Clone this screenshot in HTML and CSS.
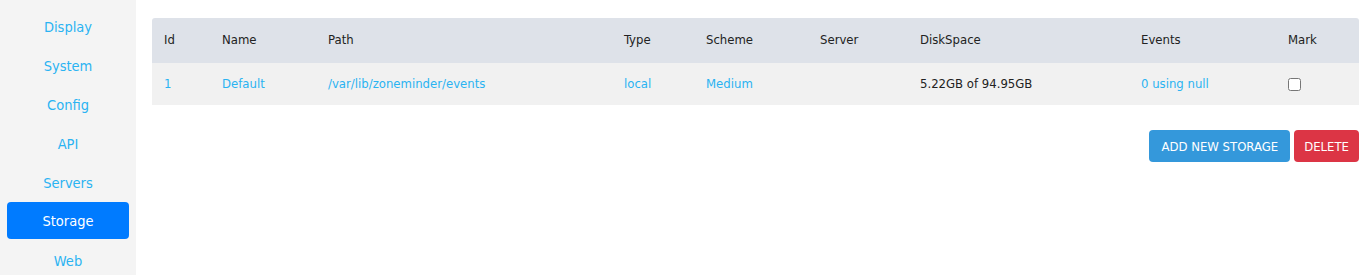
FILE: index.html
```html
<!DOCTYPE html>
<html lang="en">
<head>
    <meta charset="UTF-8">
    <title>Options - Storage</title>
    <link rel="stylesheet" href="styles.css">
</head>
<body>
    <div class="page">
        <nav class="sidebar">
            <a class="nav-item" href="#">Display</a>
            <a class="nav-item" href="#">System</a>
            <a class="nav-item" href="#">Config</a>
            <a class="nav-item" href="#">API</a>
            <a class="nav-item" href="#">Servers</a>
            <a class="nav-item active" href="#">Storage</a>
            <a class="nav-item" href="#">Web</a>
        </nav>
        <main class="content">
            <table class="storage-table">
                <thead>
                    <tr>
                        <th class="col-id">Id</th>
                        <th class="col-name">Name</th>
                        <th class="col-path">Path</th>
                        <th class="col-type">Type</th>
                        <th class="col-scheme">Scheme</th>
                        <th class="col-server">Server</th>
                        <th class="col-disk">DiskSpace</th>
                        <th class="col-events">Events</th>
                        <th class="col-mark">Mark</th>
                    </tr>
                </thead>
                <tbody>
                    <tr>
                        <td><a href="#">1</a></td>
                        <td><a href="#">Default</a></td>
                        <td><a href="#">/var/lib/zoneminder/events</a></td>
                        <td><a href="#">local</a></td>
                        <td><a href="#">Medium</a></td>
                        <td></td>
                        <td>5.22GB of 94.95GB</td>
                        <td><a href="#">0 using null</a></td>
                        <td><input type="checkbox" class="mark"></td>
                    </tr>
                </tbody>
            </table>
            <div class="actions">
                <button class="btn btn-add">ADD NEW STORAGE</button>
                <button class="btn btn-delete">DELETE</button>
            </div>
        </main>
    </div>
</body>
</html>
```

FILE: styles.css
```css
body {
    margin: 0;
    font-family: "DejaVu Sans Condensed", "DejaVu Sans", sans-serif;
    background-color: #fff;
    color: #222;
}
a {
    color: #2ab3f2;
    text-decoration: none;
}
.page {
    display: flex;
    height: 275px;
    overflow: hidden;
}
.sidebar {
    width: 136px;
    flex-shrink: 0;
    background-color: #f4f4f4;
    display: flex;
    flex-direction: column;
    gap: 2px;
    padding: 7px 7px 0;
    box-sizing: border-box;
}
.nav-item {
    display: block;
    height: 37px;
    line-height: 40px;
    text-align: center;
    font-size: 14.5px;
    border-radius: 4px;
}
.nav-item.active {
    background-color: #007bff;
    color: #fff;
    line-height: 38px;
}
.content {
    flex: 1;
    padding: 18px 0 0 16px;
}
.storage-table {
    width: 100%;
    border-collapse: collapse;
    font-size: 13px;
    text-align: left;
}
.storage-table th {
    background-color: #dee2e9;
    font-weight: normal;
    height: 43px;
    padding: 0 0 2px 12px;
}
.storage-table th:first-child {
    border-top-left-radius: 3px;
}
.storage-table th:last-child {
    border-top-right-radius: 3px;
}
.storage-table td {
    background-color: #f1f1f1;
    height: 40px;
    padding: 0 0 2px 12px;
}
.col-id { width: 46px; }
.col-name { width: 94px; }
.col-path { width: 284px; }
.col-type { width: 70px; }
.col-scheme { width: 102px; }
.col-server { width: 88px; }
.col-disk { width: 209px; }
.col-events { width: 135px; }
.mark {
    margin: 0;
    width: 13px;
    height: 13px;
    vertical-align: middle;
}
.actions {
    display: flex;
    justify-content: flex-end;
    gap: 4px;
    margin-top: 25px;
}
.btn {
    height: 32px;
    padding: 0 12px;
    border: none;
    border-radius: 4px;
    color: #fff;
    font-family: inherit;
    font-size: 13px;
    font-weight: 500;
    cursor: pointer;
}
.btn-add {
    background-color: #3498db;
}
.btn-delete {
    background-color: #dc3545;
    padding: 0 10px;
}
```
